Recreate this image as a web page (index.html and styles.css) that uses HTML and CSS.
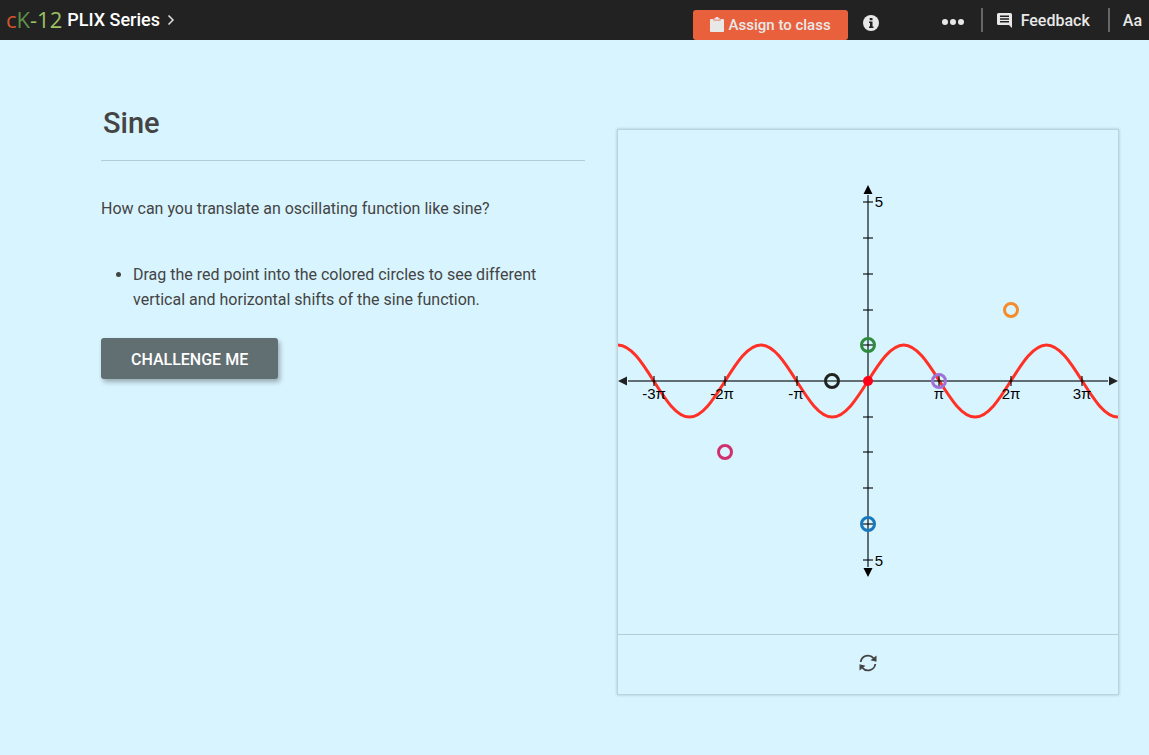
FILE: index.html
```html
<!DOCTYPE html>
<html lang="en">

<head>
  <meta charset="utf-8">
  <meta name="viewport" content="width=device-width, initial-scale=1.0">
  <title>Sine | PLIX Series</title>

  <link rel="stylesheet" href="styles.css">
</head>

<body>
  <header class="topbar">
    <a class="logo" href="#"><span class="logo-c">c</span><span class="logo-k">K</span>-12</a>
    <a class="series" href="#">PLIX Series
      <svg class="chevron" width="8" height="10" viewBox="0 0 8 10"><path d="M1.500.5L6 5 1.500 9.500" /></svg>
    </a>

    <nav class="tools">
      <button class="assign" type="button">
        <svg width="14" height="16" viewBox="0 0 14 16">
          <path d="M1 2h2.500v1.500h7V2H13a1 1 0 0 1 1 1v11a1 1 0 0 1-1 1H1a1 1 0 0 1-1-1V3a1 1 0 0 1 1-1z" />
          <path d="M4.200 2.800V1.300h1.300a1.500 1.500 0 0 1 3 0h1.300v1.500z" />
        </svg>
        Assign to class
      </button>
      <button class="tool info" type="button" aria-label="Info">
        <svg width="16" height="16" viewBox="0 0 16 16">
          <circle cx="8" cy="8" r="8" />
          <path class="info-mark" d="M6.700 3h2.800v2.300H6.700zM6 6.500h3.500v5h1V13H6v-1.500h1V8H6z" />
        </svg>
      </button>
      <button class="tool more" type="button" aria-label="More">
        <svg width="22" height="6" viewBox="0 0 22 6">
          <circle cx="3" cy="3" r="3" />
          <circle cx="11" cy="3" r="3" />
          <circle cx="19" cy="3" r="3" />
        </svg>
      </button>
      <button class="tool feedback" type="button">
        <svg width="15" height="15" viewBox="0 0 15 15">
          <path fill-rule="evenodd" d="M1.500 0h12A1.500 1.500 0 0 1 15 1.500V15l-3-3H1.500A1.500 1.500 0 0 1 0 10.500v-9A1.500 1.500 0 0 1 1.500 0zM3 2.500V4h9V2.500zM3 5.300v1.400h9V5.300zM3 8v1.500h9V8z" />
        </svg>
        Feedback
      </button>
      <button class="tool text-size" type="button">Aa</button>
    </nav>
  </header>

  <main class="content">
    <section class="intro">
      <h1 class="title">Sine</h1>
      <p class="question">How can you translate an oscillating function like sine?</p>
      <ul class="steps">
        <li>Drag the red point into the colored circles to see different vertical and horizontal shifts of the sine function.</li>
      </ul>
      <button class="challenge" type="button">CHALLENGE ME</button>
    </section>

    <section class="panel">
      <svg class="graph" viewBox="0 0 500 504">
        <!-- sine curve, one row per half wave -->
        <path class="curve" d="M0 215
          c12.92 0 24.06 17.56 35.71 36 c11.65 18.44 22.79 36 35.71 36
          c12.92 0 24.06 -17.56 35.71 -36 c11.65 -18.44 22.79 -36 35.71 -36
          c12.92 0 24.06 17.56 35.71 36 c11.65 18.44 22.79 36 35.71 36
          c12.92 0 24.06 -17.56 35.71 -36 c11.65 -18.44 22.79 -36 35.71 -36
          c12.92 0 24.06 17.56 35.71 36 c11.65 18.44 22.79 36 35.71 36
          c12.92 0 24.06 -17.56 35.71 -36 c11.65 -18.44 22.79 -36 35.71 -36
          c12.92 0 24.06 17.56 35.71 36 c11.65 18.44 22.79 36 35.71 36" />

        <!-- axes -->
        <path class="axis" d="M10 251H490M250 65V437" />
        <path class="axis" d="M36 246v10M107 246v10M179 246v10M321 246v10M393 246v10M464 246v10" />
        <path class="axis" d="M245 72h10M245 108h10M245 144h10M245 180h10M245 215h10M245 287h10M245 322h10M245 358h10M245 394h10M245 430h10" />
        <path class="arrow-x" d="M0 251l9-4.500v9zM500 251l-9-4.500v9z" />
        <path class="arrow-y" d="M250 55l-4.500 9h9zM250 447l-4.500-9h9z" />

        <!-- labels -->
        <g class="labels">
          <text x="36" y="269">-3π</text>
          <text x="104" y="269">-2π</text>
          <text x="178" y="269">-π</text>
          <text x="321" y="269">π</text>
          <text x="393" y="269">2π</text>
          <text x="464" y="269">3π</text>
          <text x="261" y="77">5</text>
          <text x="261" y="436">5</text>
        </g>

        <!-- targets -->
        <g class="targets">
          <circle cx="250" cy="215" r="6.500" stroke="#2e8b3d" />
          <circle cx="214" cy="251" r="6.500" stroke="#222222" />
          <circle cx="321" cy="251" r="6.500" stroke="#9f70d8" />
          <circle cx="393" cy="180" r="6.500" stroke="#f58b2b" />
          <circle cx="107" cy="322" r="6.500" stroke="#d0306c" />
          <circle cx="250" cy="394" r="6.500" stroke="#1878bb" />
        </g>
        <circle class="point" cx="250" cy="251" r="5" />
      </svg>

      <div class="controls">
        <button class="reset" type="button" aria-label="Reset">
          <svg width="18" height="18" viewBox="0 0 18 18">
            <path class="arc" d="M1.700 8A7.300 7.300 0 0 1 14.500 4.200M16.300 10A7.300 7.300 0 0 1 3.500 13.800" />
            <path d="M17.500 1.500v6.300l-6-1.500zM.5 16.500v-6.300l6 1.500z" />
          </svg>
        </button>
      </div>
    </section>
  </main>
</body>

</html>
```

FILE: styles.css
```css
* {
  box-sizing: border-box;
}

body {
  margin: 0;
  background: #d8f4ff;
  color: #444444;
  font-family: Roboto, "Liberation Sans", sans-serif;
  font-size: 16px;
  line-height: 25px;
}

button {
  border: 0;
  padding: 0;
  background: none;
  color: inherit;
  font: inherit;
  font-weight: 500;
  cursor: pointer;
}

svg {
  display: block;
  fill: currentColor;
}

/* top bar */
.topbar {
  display: flex;
  align-items: center;
  height: 40px;
  padding: 0 7px 0 6px;
  background: #222222;
  color: #e8e8e8;
}

.topbar a {
  text-decoration: none;
}

.logo {
  padding-bottom: 1px;
  color: #9cc063;
  font-family: "Open Sans", "Noto Sans", sans-serif;
  font-size: 22px;
}

.logo-c {
  color: #d2552c;
}

.logo-k {
  color: #5c9149;
}

.series {
  display: flex;
  align-items: center;
  gap: 7px;
  margin-left: 5px;
  padding-bottom: 1px;
  color: #ffffff;
  font-size: 18px;
  font-weight: 500;
}

.chevron {
  fill: none;
  stroke: #dddddd;
  stroke-width: 1.5;
}

.tools {
  display: flex;
  align-items: center;
  height: 40px;
  margin-left: auto;
}

.tool {
  display: flex;
  align-items: center;
}

.assign {
  display: flex;
  align-items: center;
  align-self: flex-end;
  gap: 5px;
  height: 30px;
  padding: 0 17px;
  border-radius: 3px;
  background: #e9603c;
  font-size: 15px;
}

.info {
  padding: 6px 15px 0;
}

.info-mark {
  fill: #222222;
}

.more {
  padding: 4px 17px 0 48px;
}

.feedback,
.text-size {
  height: 24px;
  border-left: 2px solid #666666;
}

.feedback {
  gap: 9px;
  padding: 0 18px 0 14px;
}

.text-size {
  padding-left: 13px;
}

/* content */
.content {
  display: grid;
  grid-template-columns: 1fr 502px;
  gap: 32px;
  align-items: start;
  padding: 60px 30px 60px 101px;
}

.title {
  margin: 0 0 35px;
  padding: 5px 2px 19px;
  border-bottom: 1px solid #b3ccd6;
  font-size: 29px;
  font-weight: 500;
  line-height: 36px;
}

.question {
  margin: 0 0 41px;
}

.steps {
  margin: 0 0 26px;
  padding-left: 32px;
}

.challenge {
  height: 41px;
  padding: 1px 30px 0;
  border-radius: 3px;
  background: #616e72;
  box-shadow: 2px 3px 5px rgba(0, 0, 0, .3);
  color: #ffffff;
}

/* graph */
.panel {
  margin-top: 29px;
  border: 1px solid #b9d5df;
  box-shadow: 0 0 3px rgba(0, 0, 0, .2);
}

.graph {
  width: 100%;
}

.curve {
  fill: none;
  stroke: #ff3126;
  stroke-width: 3;
}

.axis {
  fill: none;
  stroke: #000000;
  stroke-opacity: .55;
  stroke-width: 2;
}

.arrow-x {
  fill: #222222;
}

.arrow-y {
  fill: #000000;
}

.labels {
  fill: #000000;
  font-family: "Liberation Sans", Arial, sans-serif;
  font-size: 15px;
  text-anchor: middle;
}

.targets {
  fill: none;
  stroke-width: 3;
}

.point {
  fill: #ff0019;
}

.controls {
  display: flex;
  align-items: center;
  justify-content: center;
  height: 60px;
  padding-bottom: 4px;
  border-top: 1px solid #b3ccd6;
}

.arc {
  fill: none;
  stroke: currentColor;
  stroke-width: 1.8;
}
```
